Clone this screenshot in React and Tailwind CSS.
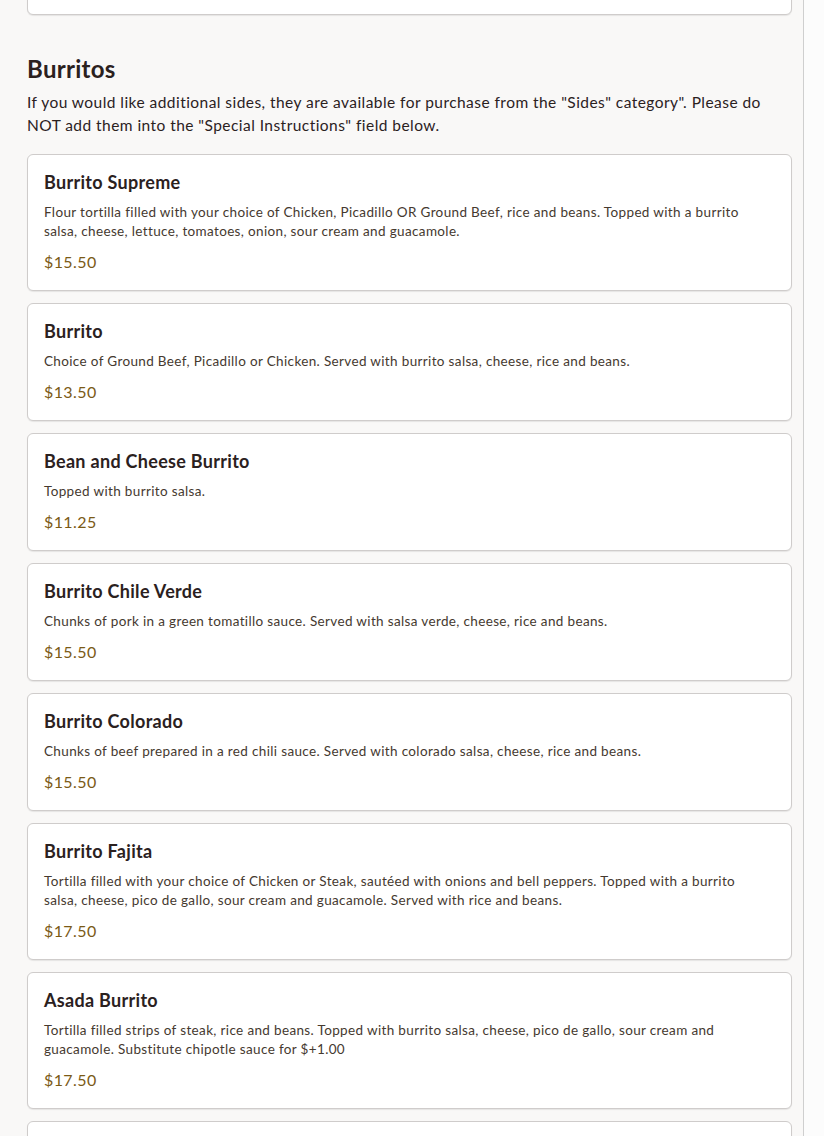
import React from "react";

const items = [
  {
    name: "Burrito Supreme",
    desc: "Flour tortilla filled with your choice of Chicken, Picadillo OR Ground Beef, rice and beans. Topped with a burrito salsa, cheese, lettuce, tomatoes, onion, sour cream and guacamole.",
    price: "$15.50",
  },
  {
    name: "Burrito",
    desc: "Choice of Ground Beef, Picadillo or Chicken. Served with burrito salsa, cheese, rice and beans.",
    price: "$13.50",
  },
  { name: "Bean and Cheese Burrito", desc: "Topped with burrito salsa.", price: "$11.25" },
  {
    name: "Burrito Chile Verde",
    desc: "Chunks of pork in a green tomatillo sauce. Served with salsa verde, cheese, rice and beans.",
    price: "$15.50",
  },
  {
    name: "Burrito Colorado",
    desc: "Chunks of beef prepared in a red chili sauce. Served with colorado salsa, cheese, rice and beans.",
    price: "$15.50",
  },
  {
    name: "Burrito Fajita",
    desc: "Tortilla filled with your choice of Chicken or Steak, sautéed with onions and bell peppers. Topped with a burrito salsa, cheese, pico de gallo, sour cream and guacamole. Served with rice and beans.",
    price: "$17.50",
  },
  {
    name: "Asada Burrito",
    desc: "Tortilla filled strips of steak, rice and beans. Topped with burrito salsa, cheese, pico de gallo, sour cream and guacamole. Substitute chipotle sauce for $+1.00",
    price: "$17.50",
  },
  { name: "", desc: "", price: "" },
];

function Card({ item }) {
  return (
    <div className="rounded-md border border-[#cfcccb] bg-white px-4 pt-4 pb-4 shadow-[0_1px_1px_rgba(0,0,0,0.08)]">
      <div className="text-[18px] leading-[22px] font-bold tracking-[0.3px] text-[#2b211e]">{item.name}</div>
      <p className="mt-[10px] pr-8 text-[13.5px] leading-[19px] tracking-[0.35px] text-[#45392f]">{item.desc}</p>
      <div className="mt-[9px] text-[16px] leading-[24px] tracking-[0.4px] text-[#7b5a16]">{item.price}</div>
    </div>
  );
}

export default function App() {
  return (
    <div
      className="flex h-[1136px] overflow-hidden bg-[#fcfcfc]"
      style={{ fontFamily: "Lato, 'Noto Sans', sans-serif" }}
    >
      <div className="w-[804px] shrink-0 border-r border-[#cfcfcf] bg-[#f9f8f7] pl-[27px] pr-[11px]">
        <div className="-mt-[40px] h-[55px] rounded-md border border-[#cfcccb] bg-white shadow-[0_1px_1px_rgba(0,0,0,0.08)]" />
        <h2 className="mt-[38px] text-[24px] leading-[32px] font-bold tracking-[0.3px] text-[#2b211e]">Burritos</h2>
        <p className="mt-[6px] pr-6 text-[15.5px] leading-[23px] tracking-[0.45px] text-[#2b211e]">
          If you would like additional sides, they are available for purchase from the "Sides" category". Please do NOT
          add them into the "Special Instructions" field below.
        </p>
        <div className="mt-[17px] flex flex-col gap-[12px]">
          {items.map((it, i) => (
            <Card key={i} item={it} />
          ))}
        </div>
      </div>
    </div>
  );
}
